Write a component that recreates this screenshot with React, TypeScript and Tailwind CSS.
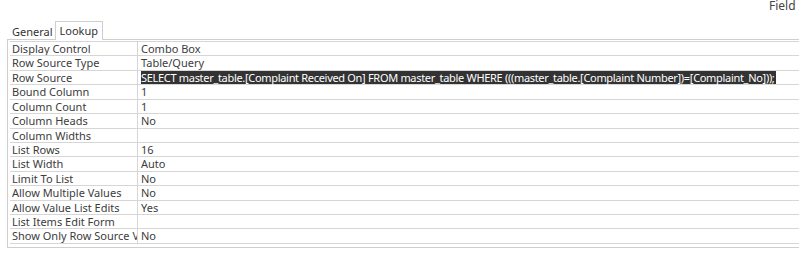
import React from "react";

const rows: [string, string][] = [
  ["Display Control", "Combo Box"],
  ["Row Source Type", "Table/Query"],
  [
    "Row Source",
    "SELECT master_table.[Complaint Received On] FROM master_table WHERE (((master_table.[Complaint Number])=[Complaint_No]));",
  ],
  ["Bound Column", "1"],
  ["Column Count", "1"],
  ["Column Heads", "No"],
  ["Column Widths", ""],
  ["List Rows", "16"],
  ["List Width", "Auto"],
  ["Limit To List", "No"],
  ["Allow Multiple Values", "No"],
  ["Allow Value List Edits", "Yes"],
  ["List Items Edit Form", ""],
  ["Show Only Row Source Values", "No"],
];

export default function App() {
  return (
    <div className="w-[799px] h-[256px] overflow-hidden bg-white text-[#3c3c3c] font-['Noto_Sans',sans-serif] text-[11px] leading-none">
      <div className="h-[20px] pl-[769px] whitespace-nowrap text-[12px] leading-[12px] text-[#444]">
        Field Properties
      </div>

      <div className="flex items-end h-[19px] pl-[10px]">
        <div className="px-[2px] pb-[2px] text-[#333]">General</div>
        <div className="h-[19px] px-[4px] pt-[3px] border border-b-0 border-[#cfcfcf] bg-white text-[#333] -mb-px relative">
          Lookup
        </div>
      </div>

      <div className="ml-[7px] w-[900px] border border-[#cfcfcf] pt-[1px] pl-[2px] pb-[3px]">
        <div className="border-t border-[#d6d6d6]">
          {rows.map(([label, value]) => (
            <div key={label} className="flex h-[14.43px] border-b border-[#d6d6d6]">
              <div className="w-[128px] shrink-0 border-r border-[#d6d6d6] pl-[2px] overflow-hidden whitespace-nowrap leading-[13px]">
                {label}
              </div>
              <div className="pl-[3px] whitespace-nowrap leading-[13px]">
                {label === "Row Source" ? (
                  <span className="bg-[#333333] text-white inline-block h-[13px] tracking-[-0.31px] pr-[1px]">
                    {value}
                  </span>
                ) : (
                  value
                )}
              </div>
            </div>
          ))}
        </div>
      </div>
    </div>
  );
}
